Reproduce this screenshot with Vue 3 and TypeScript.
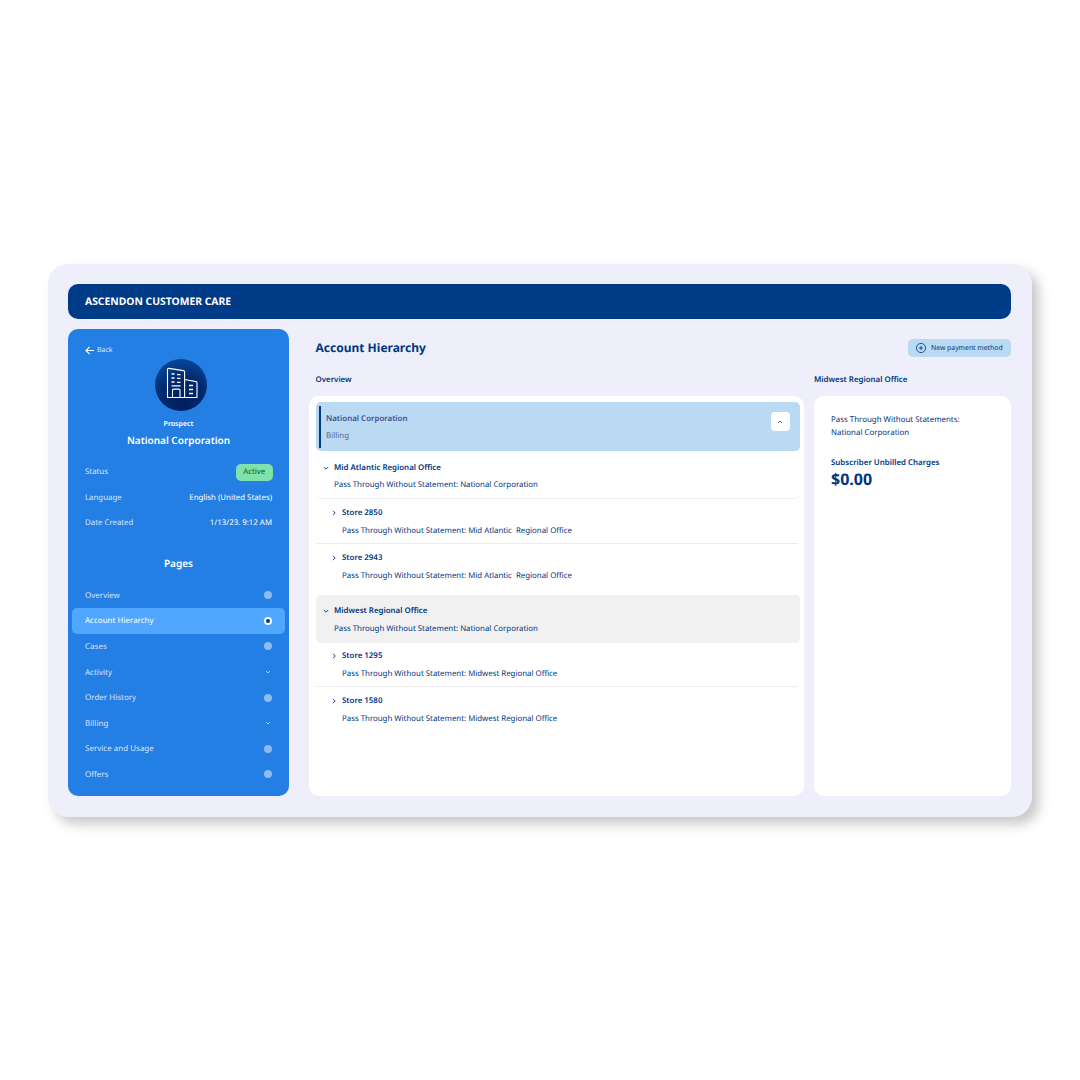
<template>
  <div class="page">
    <div class="shell">
      <header class="topbar">ASCENDON CUSTOMER CARE</header>
      <div class="body">
        <aside class="sidebar">
          <div class="back">
            <svg width="10" height="10" viewBox="0 0 10 10" fill="none" stroke="#fff" stroke-width="1.1">
              <path d="M9 4.500H1M4.600 .8 1 4.500l3.600 3.700" />
            </svg>
            <span>Back</span>
          </div>
          <div class="avatar">
            <svg width="33" height="32" viewBox="0 0 33 32" fill="none" stroke="#fff" stroke-width="1.1" stroke-linejoin="round">
              <path d="M1.5 30.500V2.600c0-.8.6-1.300 1.400-1.200l14.600 2.200c.7.1 1.100.6 1.100 1.300v25.600z" />
              <path d="M18.600 12.500 30 14.600c.6.1 1 .6 1 1.200v14.700H18.600" />
              <path d="M6.500 30.500v-7.200c0-.7.5-1.200 1.200-1.200h5.100c.7 0 1.200.5 1.200 1.200v7.200" />
              <path d="M5.500 7h3M11 7.600h3.500M5.500 11h3M11 11.400h3.500M5.500 15h3M11 15.400h3.500M5.500 18.800h9M23 18.500h4M23 22.500h4M23 26.500h4" stroke-width="1.300" />
            </svg>
          </div>
          <div class="prospect">Prospect</div>
          <div class="corp">National Corporation</div>

          <div class="facts">
            <div class="fact">
              <span class="fact-label">Status</span>
              <span class="badge">Active</span>
            </div>
            <div class="fact">
              <span class="fact-label">Language</span>
              <span>English (United States)</span>
            </div>
            <div class="fact">
              <span class="fact-label">Date Created</span>
              <span>1/13/23. 9:12 AM</span>
            </div>
          </div>

          <div class="pages-title">Pages</div>
          <nav class="nav">
            <div v-for="item in pages" :key="item.label" class="nav-row" :class="{ active: item.active }">
              <span>{{ item.label }}</span>
              <svg v-if="item.chevron" width="8" height="8" viewBox="0 0 8 8" fill="none" stroke="#bcd6f6" stroke-width="0.9">
                <path d="M2 3l2 2 2-2" />
              </svg>
              <span v-else class="dot"></span>
            </div>
          </nav>
        </aside>

        <main class="main">
          <div class="title-row">
            <h1>Account Hierarchy</h1>
            <button class="pay-btn">
              <svg width="12" height="12" viewBox="0 0 12 12" fill="none" stroke="#00367f" stroke-width="0.8">
                <circle cx="6" cy="6" r="4.600" />
                <path d="M6 3.800v4.400M3.800 6h4.400" />
              </svg>
              New payment method
            </button>
          </div>
          <div class="columns">
            <section class="col-left">
              <h2>Overview</h2>
              <div class="card tree">
                <div class="root">
                  <div>
                    <div class="root-name">National Corporation</div>
                    <div class="root-sub">Billing</div>
                  </div>
                  <span class="collapse">
                    <svg width="8" height="8" viewBox="0 0 8 8" fill="none" stroke="#3d4f7c" stroke-width="0.9">
                      <path d="M2 5l2-2 2 2" />
                    </svg>
                  </span>
                </div>

                <div v-for="group in groups" :key="group.name" class="group">
                  <div class="region" :class="{ selected: group.selected }">
                    <div class="row-head">
                      <svg width="8" height="8" viewBox="0 0 8 8" fill="none" stroke="#00367f" stroke-width="0.9">
                        <path d="M1.800 3l2.200 2.200L6.200 3" />
                      </svg>
                      <span>{{ group.name }}</span>
                    </div>
                    <div class="row-sub">{{ group.sub }}</div>
                  </div>
                  <div v-for="store in group.stores" :key="store" class="store">
                    <div class="row-head">
                      <svg width="8" height="8" viewBox="0 0 8 8" fill="none" stroke="#00367f" stroke-width="0.9">
                        <path d="M3 1.800 5.200 4 3 6.200" />
                      </svg>
                      <span>{{ store }}</span>
                    </div>
                    <div class="row-sub">{{ group.storeSub }}</div>
                  </div>
                </div>
              </div>
            </section>

            <section class="col-right">
              <h2>Midwest Regional Office</h2>
              <div class="card detail">
                <p>Pass Through Without Statements:<br />National Corporation</p>
                <div class="charges-label">Subscriber Unbilled Charges</div>
                <div class="charges">$0.00</div>
              </div>
            </section>
          </div>
        </main>
      </div>
    </div>
  </div>
</template>

<script setup lang="ts">
type PageItem = { label: string; chevron?: boolean; active?: boolean };

const pages: PageItem[] = [
  { label: 'Overview' },
  { label: 'Account Hierarchy', active: true },
  { label: 'Cases' },
  { label: 'Activity', chevron: true },
  { label: 'Order History' },
  { label: 'Billing', chevron: true },
  { label: 'Service and Usage' },
  { label: 'Offers' },
];

const groups = [
  {
    name: 'Mid Atlantic Regional Office',
    sub: 'Pass Through Without Statement: National Corporation',
    storeSub: 'Pass Through Without Statement: Mid Atlantic\u00a0 Regional Office',
    stores: ['Store 2850', 'Store 2943'],
    selected: false,
  },
  {
    name: 'Midwest Regional Office',
    sub: 'Pass Through Without Statement: National Corporation',
    storeSub: 'Pass Through Without Statement: Midwest Regional Office',
    stores: ['Store 1295', 'Store 1580'],
    selected: true,
  },
];
</script>

<style>
html,
body {
  margin: 0;
  background: #fff;
}
</style>

<style scoped>
.page {
  height: 1080px;
  padding: 264px 48px 0;
  box-sizing: border-box;
  font-family: "Noto Sans", "Open Sans", sans-serif;
  color: #00367f;
  text-rendering: geometricPrecision;
}

.shell {
  width: 984px;
  height: 553px;
  box-sizing: border-box;
  padding: 20px 21px 21px 20px;
  background: #eeeffb;
  border-radius: 20px;
  box-shadow: 7px 7px 12px rgba(60, 60, 70, 0.28);
}

.topbar {
  height: 35px;
  padding-left: 17px;
  display: flex;
  align-items: center;
  background: #003b88;
  border-radius: 10px;
  color: #fff;
  font-size: 10.350px;
  font-weight: 700;
}

.body {
  display: flex;
  gap: 20px;
  margin-top: 10px;
  height: 467px;
}

.sidebar {
  width: 221px;
  flex: none;
  box-sizing: border-box;
  padding: 15.500px 4px 0;
  background: #247fe4;
  border-radius: 10px;
  color: #fff;
}

.back {
  display: flex;
  align-items: center;
  gap: 2px;
  padding-left: 13px;
  height: 12px;
  font-size: 7px;
  color: #dceafc;
}

.avatar {
  width: 52px;
  height: 52px;
  margin: 2.500px 0 0 82.500px;
  box-sizing: border-box;
  padding: 0 0 5px 3px;
  display: flex;
  align-items: center;
  justify-content: center;
  border-radius: 50%;
  background: radial-gradient(circle at 55% 80%, #001f5f 0%, #00296f 45%, #0d53ac 100%);
}

.prospect {
  margin-top: 8.500px;
  text-align: center;
  font-size: 7px;
  font-weight: 600;
  line-height: 10px;
}

.corp {
  margin-top: 3.500px;
  text-align: center;
  font-size: 10px;
  font-weight: 600;
  line-height: 14px;
}

.facts {
  margin-top: 12.500px;
  padding: 0 13px;
}

.fact {
  height: 25.500px;
  display: flex;
  align-items: center;
  justify-content: space-between;
  font-size: 7.850px;
}

.fact-label {
  color: #d5e5fa;
}

.badge {
  width: 36.500px;
  height: 17px;
  margin-right: -0.500px;
  display: flex;
  align-items: center;
  justify-content: center;
  background: #7fe2a8;
  border-radius: 5px;
  color: #06592f;
}

.pages-title {
  margin-top: 19.500px;
  text-align: center;
  font-size: 10px;
  font-weight: 600;
  line-height: 14px;
}

.nav {
  margin-top: 13px;
  display: flex;
  flex-direction: column;
}

.nav-row {
  height: 25.600px;
  box-sizing: border-box;
  padding: 0 13px;
  display: flex;
  align-items: center;
  justify-content: space-between;
  font-size: 8px;
  color: #d5e5fa;
  border-radius: 5px;
}

.nav-row.active {
  background: #51a7fd;
  color: #fff;
}

.dot {
  width: 8px;
  height: 8px;
  border-radius: 50%;
  background: #8ebaf1;
}

.active .dot {
  box-sizing: border-box;
  background: #00367f;
  border: 2px solid #fff;
}

.main {
  flex: 1;
  min-width: 0;
  display: flex;
  flex-direction: column;
}

.title-row {
  height: 38px;
  padding-left: 6.500px;
  display: flex;
  align-items: center;
  justify-content: space-between;
}

h1 {
  margin: 0 0 1px;
  font-size: 12px;
  font-weight: 700;
  color: #00367f;
}

.pay-btn {
  width: 103px;
  height: 18.500px;
  padding: 0 0 0 7px;
  display: flex;
  align-items: center;
  gap: 4px;
  border: 0;
  border-radius: 5px;
  background: #bad9f3;
  color: #00367f;
  font-family: inherit;
  font-size: 6.850px;
  white-space: nowrap;
  text-rendering: geometricPrecision;
}

.columns {
  flex: 1;
  display: flex;
  gap: 10px;
  min-height: 0;
}

.col-left {
  width: 495px;
  flex: none;
  display: flex;
  flex-direction: column;
}

.col-right {
  flex: 1;
  display: flex;
  flex-direction: column;
}

h2 {
  margin: 0;
  height: 25px;
  padding-bottom: 4px;
  display: flex;
  align-items: center;
  font-size: 7.900px;
  font-weight: 600;
  color: #00367f;
}

.col-left h2 {
  padding-left: 6.500px;
}

.card {
  flex: 1;
  background: #fff;
  border-radius: 10px;
}

.tree {
  padding: 6px 4.500px 0 6.500px;
}

.root {
  height: 49px;
  box-sizing: border-box;
  padding: 0 10px 0 10.500px;
  display: flex;
  align-items: center;
  justify-content: space-between;
  background: #bad9f3;
  border-radius: 5px;
  position: relative;
}

.root::before {
  content: "";
  position: absolute;
  left: 3px;
  top: 3.500px;
  bottom: 3.500px;
  width: 2px;
  background: #003b88;
}

.root-name {
  margin-top: 3.500px;
  font-size: 7.900px;
  font-weight: 600;
  color: #3d4f94;
  line-height: 11px;
}

.root-sub {
  margin-top: 6px;
  font-size: 7.900px;
  color: #5c6a8d;
  line-height: 11px;
}

.collapse {
  width: 19px;
  height: 19px;
  margin-top: -10px;
  display: flex;
  align-items: center;
  justify-content: center;
  background: #fff;
  border-radius: 4px;
}

.region {
  height: 47.500px;
  box-sizing: border-box;
  padding-top: 11px;
  border-radius: 5px;
  border-bottom: 1px solid #ececf0;
}

.region .row-sub {
  margin-top: 6.500px;
}

.region.selected {
  height: 48.500px;
  margin-top: 6px;
  padding-top: 10.500px;
  background: #f1f1f2;
  border-bottom: 0;
}

.region.selected .row-sub {
  margin-top: 7.500px;
}

.row-head {
  display: flex;
  align-items: center;
  gap: 4px;
  padding-left: 6.500px;
  height: 11px;
  font-size: 7.900px;
  font-weight: 600;
}

.row-sub {
  margin-top: 7.500px;
  padding-left: 18.500px;
  font-size: 7.850px;
  line-height: 11px;
}

.store {
  height: 45px;
  box-sizing: border-box;
  margin-right: 2px;
  padding-top: 8.500px;
  border-bottom: 1px solid #ececf0;
}

.region.selected + .store {
  height: 43.500px;
  padding-top: 7px;
}

.store .row-head {
  padding-left: 14.500px;
}

.store .row-sub {
  padding-left: 26.500px;
}

.store:last-child {
  border-bottom: 0;
}

.detail {
  padding: 17.500px 17px;
}

.detail p {
  margin: 0;
  font-size: 7.900px;
  line-height: 13.500px;
}

.charges-label {
  margin-top: 17px;
  font-size: 7.900px;
  font-weight: 600;
  line-height: 11px;
}

.charges {
  font-size: 16px;
  font-weight: 700;
  line-height: 22px;
  margin-top: -0.500px;
}
</style>
